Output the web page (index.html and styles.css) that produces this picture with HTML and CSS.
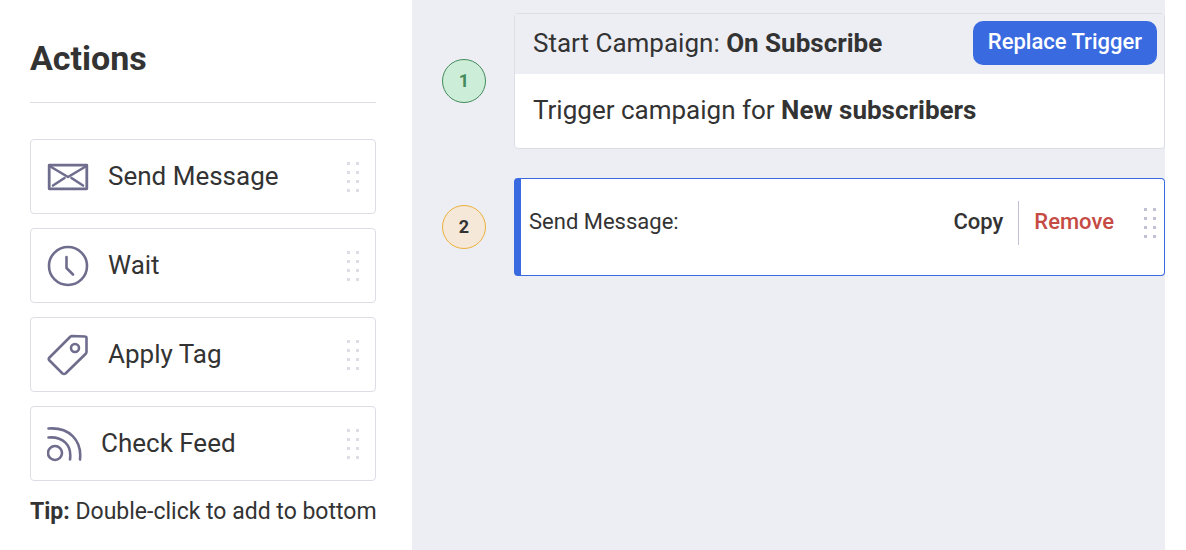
FILE: index.html
```
<!DOCTYPE html>
<html lang="en">
<head>
  <meta charset="UTF-8">
  <meta name="viewport" content="width=device-width, initial-scale=1">
  <title>Campaign Builder</title>
  <link rel="stylesheet" href="styles.css">
</head>
<body>
  <svg class="sprite" width="0" height="0" aria-hidden="true">
    <symbol id="grip" viewBox="0 0 14 32">
      <path d="M1 1h3v3H1zM10 1h3v3h-3zM1 10h3v3H1zM10 10h3v3h-3zM1 19h3v3H1zM10 19h3v3h-3zM1 28h3v3H1zM10 28h3v3h-3z"/>
    </symbol>
  </svg>

  <aside class="sidebar">
    <h1>Actions</h1>
    <ul class="action-list">
      <li class="action">
        <svg class="icon" width="42" height="42" viewBox="0 0 42 42">
          <path d="M2.2 9.2h37.6v23.6H2.2z" stroke-width="2.8"/>
          <path d="M2.5 10 21 21 39.500 10M6 29.500l11.500-7.500M36 29.500 24.500 22"/>
        </svg>
        <span class="action-name">Send Message</span>
        <svg class="grip" width="14" height="32"><use href="#grip"/></svg>
      </li>
      <li class="action">
        <svg class="icon" width="42" height="42" viewBox="0 0 42 42">
          <circle cx="21" cy="21" r="19"/>
          <path d="M19.500 12v11l6.500 6.500"/>
        </svg>
        <span class="action-name">Wait</span>
        <svg class="grip" width="14" height="32"><use href="#grip"/></svg>
      </li>
      <li class="action">
        <svg class="icon" width="42" height="42" viewBox="0 0 42 42">
          <path d="M25 2 38 2.500q1.500 0 1.500 1.500v14q0 1-1 2L18.500 39.500q-1.500 1-3 0L2.500 26.500q-1.500-1.500 0-3L23 3q1-1 2-1z"/>
          <circle cx="28" cy="14" r="4"/>
        </svg>
        <span class="action-name">Apply Tag</span>
        <svg class="grip" width="14" height="32"><use href="#grip"/></svg>
      </li>
      <li class="action">
        <svg class="icon" width="35" height="42" viewBox="0 0 35 42">
          <circle cx="8" cy="30" r="7"/>
          <path d="M1.500 14.500C16 13.500 25 22 23 36.500M1.500 5.500C22 4 35 17 33 36.500"/>
        </svg>
        <span class="action-name">Check Feed</span>
        <svg class="grip" width="14" height="32"><use href="#grip"/></svg>
      </li>
    </ul>
    <p class="tip"><strong>Tip:</strong> Double-click to add to bottom</p>
  </aside>

  <main class="canvas">
    <div class="step">
      <span class="step-number trigger">1</span>
      <section class="card">
        <div class="card-header">
          <div>Start Campaign: <strong>On Subscribe</strong></div>
          <button class="replace" type="button">Replace Trigger</button>
        </div>
        <div class="card-body">Trigger campaign for <strong>New subscribers</strong></div>
      </section>
    </div>
    <div class="step">
      <span class="step-number">2</span>
      <section class="card selected">
        <div class="card-title">Send Message:</div>
        <button class="link copy" type="button">Copy</button>
        <button class="link remove" type="button">Remove</button>
        <svg class="grip" width="14" height="32"><use href="#grip"/></svg>
      </section>
    </div>
  </main>
</body>
</html>
```

FILE: styles.css
```
* {
  box-sizing: border-box;
}
body {
  display: flex;
  min-height: 100vh;
  margin: 0;
  padding-right: 21px;
  background-color: #fff;
  color: #333;
  font-family: Roboto, "Liberation Sans", sans-serif;
  font-size: 26px;
  line-height: 32px;
}
button {
  font-family: inherit;
  font-size: 22px;
  font-weight: 500;
  line-height: 28px;
  cursor: pointer;
}
.sprite {
  position: absolute;
}

/* Sidebar */
.sidebar {
  flex: 0 0 412px;
  min-width: 0;
  padding: 38px 36px 20px 30px;
}
h1 {
  margin: 0 0 36px;
  padding-bottom: 24px;
  border-bottom: 1px solid #dddde6;
  font-size: 34px;
  line-height: 40px;
}
.action-list {
  display: flex;
  flex-direction: column;
  gap: 14px;
  margin: 0;
  padding: 0;
  list-style: none;
}
.action {
  display: flex;
  align-items: center;
  height: 75px;
  padding: 0 15px 0 16px;
  border: 1px solid #dddde6;
  border-radius: 4px;
  cursor: grab;
}
.action-name {
  flex: 1;
  padding: 0 0 2px 19px;
}
.icon {
  fill: none;
  stroke: #6f6d8d;
  stroke-width: 2.6;
  stroke-linecap: round;
  stroke-linejoin: round;
}
.grip {
  flex: none;
  fill: #dddde6;
}
.tip {
  margin: 17px 0 0;
  font-size: 23px;
  line-height: 28px;
  white-space: nowrap;
}

/* Campaign steps */
.canvas {
  flex: 1;
  display: flex;
  flex-direction: column;
  gap: 29px;
  min-width: 0;
  padding: 13px 0 13px 30px;
  background-color: #edeef3;
}
.step {
  display: flex;
  align-items: center;
  gap: 28px;
}
.step-number {
  flex: none;
  width: 44px;
  height: 44px;
  border: 1px solid #ecb03c;
  border-radius: 50%;
  background-color: #f5e8d9;
  font-size: 18px;
  font-weight: 700;
  line-height: 42px;
  text-align: center;
}
.step-number.trigger {
  border-color: #448a5b;
  background-color: #cceed8;
  color: #448a5b;
}
.card {
  flex: 1;
  border: 1px solid #dddde6;
  border-radius: 4px;
  background-color: #fff;
}
.card-header {
  display: flex;
  align-items: center;
  justify-content: space-between;
  height: 60px;
  padding: 0 7px 2px 18px;
  background-color: #edeef3;
}
.card-body {
  padding: 20px 18px 22px;
}
.replace {
  height: 44px;
  padding: 0 15px 2px;
  border: none;
  border-radius: 10px;
  background-color: #3a6ae0;
  color: #fff;
}
.card.selected {
  display: flex;
  align-items: center;
  height: 98px;
  padding: 0 7px 8px 8px;
  border-color: #3a6ae0;
  border-left-width: 7px;
}
.card-title {
  flex: 1;
  padding-bottom: 2px;
  font-size: 22px;
}
.link {
  height: 44px;
  padding: 0 15px 2px;
  border: none;
  background: none;
  color: #333;
}
.link.remove {
  margin-right: 14px;
  border-left: 1px solid #c0c2d4;
  color: #c54b44;
}
.selected .grip {
  fill: #c0c2d4;
}
```
